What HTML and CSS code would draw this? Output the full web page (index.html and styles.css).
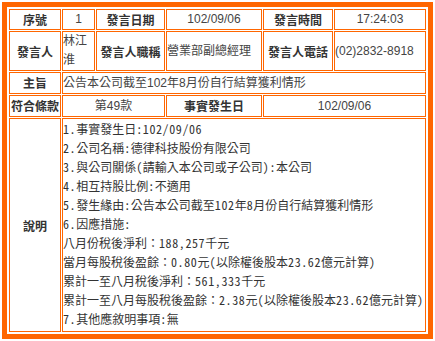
FILE: index.html
```html
<!DOCTYPE html>
<html lang="zh-Hant">
<head>
<meta charset="utf-8">
<title>重大訊息</title>
<link rel="stylesheet" href="styles.css">
</head>
<body>
<table class="info">
  <tr>
    <th class="w1">序號</th>
    <td class="w2 ctr">1</td>
    <th class="w3">發言日期</th>
    <td class="w4 ctr">102/09/06</td>
    <th class="w5">發言時間</th>
    <td class="w6 ctr">17:24:03</td>
  </tr>
  <tr>
    <th>發言人</th>
    <td>林江淮</td>
    <th>發言人職稱</th>
    <td>營業部副總經理</td>
    <th>發言人電話</th>
    <td>(02)2832-8918</td>
  </tr>
  <tr class="mid">
    <th>主旨</th>
    <td colspan="5">公告本公司截至102年8月份自行結算獲利情形</td>
  </tr>
  <tr class="mid">
    <th>符合條款</th>
    <td colspan="2" class="ctr">第49款</td>
    <th>事實發生日</th>
    <td colspan="2" class="ctr">102/09/06</td>
  </tr>
  <tr>
    <th>說明</th>
    <td colspan="5" class="desc"><span class="a">1.</span>事實發生日<span class="a">:102/09/06</span><br><span class="a">2.</span>公司名稱<span class="a">:</span>德律科技股份有限公司<br><span class="a">3.</span>與公司關係<span class="a">(</span>請輸入本公司或子公司<span class="a">):</span>本公司<br><span class="a">4.</span>相互持股比例<span class="a">:</span>不適用<br><span class="a">5.</span>發生緣由<span class="a">:</span>公告本公司截至<span class="a">102</span>年<span class="a">8</span>月份自行結算獲利情形<br><span class="a">6.</span>因應措施<span class="a">:</span><br>八月份稅後淨利：<span class="a">188,257</span>千元<br>當月每股稅後盈餘：<span class="a">0.80</span>元<span class="a">(</span>以除權後股本<span class="a">23.62</span>億元計算<span class="a">)</span><br>累計一至八月稅後淨利：<span class="a">561,333</span>千元<br>累計一至八月每股稅後盈餘：<span class="a">2.38</span>元<span class="a">(</span>以除權後股本<span class="a">23.62</span>億元計算<span class="a">)</span><br><span class="a">7.</span>其他應敘明事項<span class="a">:</span>無</td>
  </tr>
</table>
</body>
</html>
```

FILE: styles.css
```css
html, body {
  margin: 0;
  background: #ffffff;
}

body {
  padding: 2px 0 0 2px;
}

.info {
  width: 431px;
  box-sizing: border-box;
  border: 5px solid #ff6600;
  padding: 1px;
  border-spacing: 1px;
  table-layout: fixed;
  font-family: "Liberation Sans", "Noto Sans CJK TC", sans-serif;
  font-size: 12px;
  color: #444444;
}

.info th,
.info td {
  border: 1px solid #ff6600;
  padding: 0;
  line-height: 19px;
  box-sizing: border-box;
  vertical-align: middle;
  text-align: left;
}

.info th {
  font-family: "Noto Sans CJK TC", sans-serif;
  font-weight: bold;
  color: #333333;
  white-space: nowrap;
  text-align: center;
}

.info .ctr {
  text-align: center;
}

.w1 { width: 52px; }
.w2 { width: 33px; }
.w3 { width: 69px; }
.w4 { width: 96px; }
.w5 { width: 70px; }
.w6 { width: 92px; }

.mid th,
.mid td {
  line-height: 20px;
}

.info .desc {
  font-family: "Noto Sans Mono CJK TC", "Noto Sans CJK TC", monospace;
  color: #333333;
  padding-bottom: 3px;
  white-space: nowrap;
}

.desc .a {
  letter-spacing: 0.6px;
}
```
